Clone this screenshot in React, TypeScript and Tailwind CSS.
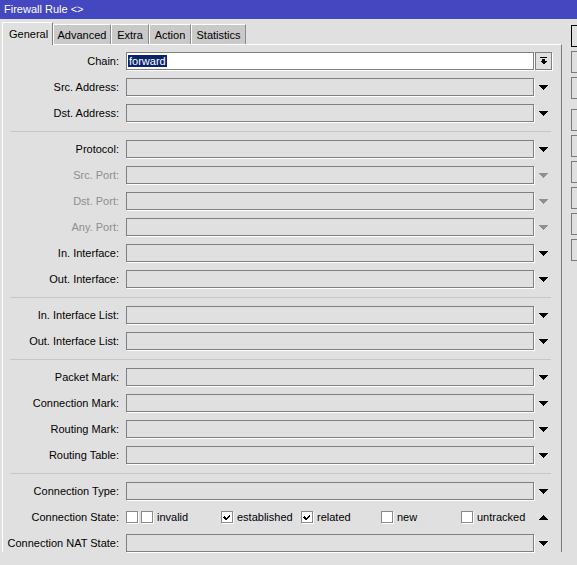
import React from "react";

const BG = "bg-[#e0e0e0]";

function Arrow({ disabled, up }: { disabled?: boolean; up?: boolean }) {
  return (
    <div className="w-[18px] h-[18px] flex items-center justify-center">
      <svg width="10" height="5" viewBox="0 0 10 5" shapeRendering="crispEdges">
        <polygon
          points={up ? "0,5 10,5 5,0" : "0,0 10,0 5,5"}
          fill={disabled ? "#8b918b" : "#000"}
        />
      </svg>
    </div>
  );
}

function Field({ white, children }: { white?: boolean; children?: React.ReactNode }) {
  return (
    <div
      className={`h-[18px] w-[408px] border border-[#808080] shadow-[1px_1px_0_#ffffff] flex items-center ${
        white ? "bg-white" : BG
      }`}
    >
      {children}
    </div>
  );
}

function Label({ text, disabled }: { text: string; disabled?: boolean }) {
  return (
    <div
      className={`w-[116px] shrink-0 text-right mr-[7px] whitespace-nowrap ${
        disabled ? "text-[#8e8e8e]" : "text-black"
      }`}
    >
      {text}
    </div>
  );
}

function Row({ label, disabled }: { label: string; disabled?: boolean }) {
  return (
    <div className="h-[18px] flex items-center">
      <Label text={label} disabled={disabled} />
      <Field />
      <Arrow disabled={disabled} />
    </div>
  );
}

function Sep() {
  return <div className="h-[2px] ml-[7px] w-[541px] border-b border-[#c6c6c6]" />;
}

function Check({ checked }: { checked?: boolean }) {
  return (
    <div className="w-[12px] h-[12px] shrink-0 border border-[#8a8a8a] bg-white shadow-[1px_1px_0_#ffffff] flex items-center justify-center">
      {checked && (
        <svg width="8" height="8" viewBox="0 0 8 8" shapeRendering="crispEdges">
          <path d="M1 3h1v1h1v1h1v-1h1v-1h1v-1h1v1h-1v1h-1v1h-1v1h-1v1h-1v-1h-1v-1h-1z" fill="#000" />
          <path d="M1 4h1v1h1v1h1v-1h1v-1h1v-1h1v1h-1v1h-1v1h-1v1h-1v-1h-1v-1h-1z" fill="#000" />
        </svg>
      )}
    </div>
  );
}

function CheckItem({ label, checked, w }: { label: string; checked?: boolean; w?: string }) {
  return (
    <div className={`flex items-center ${w ?? ""}`}>
      <Check checked={checked} />
      <span className="ml-[4px]">{label}</span>
    </div>
  );
}

export default function App() {
  const tabs = [
    { name: "Advanced", w: "w-[58px]" },
    { name: "Extra", w: "w-[38px]" },
    { name: "Action", w: "w-[42px]" },
    { name: "Statistics", w: "w-[55px]" },
  ];
  const buttonTops = ["", "mt-[4px]", "mt-[4px]", "mt-[10px]", "mt-[4px]", "mt-[4px]", "mt-[4px]", "mt-[4px]", "mt-[4px]"];
  return (
    <div
      className={`w-[577px] h-[565px] overflow-hidden ${BG} text-[11px] leading-[13px] text-black`}
      style={{ fontFamily: '"Liberation Sans", Arial, sans-serif' }}
    >
      <div className="h-[19px] bg-[#4447bf] text-white flex items-center pl-[4px]">Firewall Rule &lt;&gt;</div>
      <div className="flex">
        <div className="w-[562px] shrink-0 flex flex-col">
          <div className="h-[22px] mt-[3px] flex items-end pl-[2px]">
            <div className={`relative z-10 -mb-px h-[23px] w-[51px] ${BG} border-l border-t border-white border-r-[#808080] border-r flex items-start pt-[5px] pl-[6px]`}>
              General
            </div>
            {tabs.map((t) => (
              <div
                key={t.name}
                className={`h-[20px] ${t.w} bg-[#c9c9c9] border-l border-t border-white border-r border-r-[#8a8a8a] flex items-start pt-[4px] justify-center`}
              >
                {t.name}
              </div>
            ))}
          </div>
          <div className="ml-[2px] flex-1 border-t border-l border-white border-r border-r-[#7a7a7a] pt-[7px] flex flex-col gap-[8px]">
            <div className="h-[18px] flex items-center">
              <Label text="Chain:" />
              <Field white>
                <span className="ml-px bg-[#0a246a] text-white px-px leading-[12px]">forward</span>
              </Field>
              <div className="ml-px w-[17px] h-[18px] border border-[#808080] shadow-[1px_1px_0_#ffffff] flex items-center justify-center">
                <svg width="7" height="8" viewBox="0 0 7 8" shapeRendering="crispEdges">
                  <rect x="0" y="0" width="7" height="1" fill="#000" />
                  <rect x="2" y="2" width="3" height="2" fill="#000" />
                  <polygon points="0,4 7,4 3.5,7.5" fill="#000" />
                </svg>
              </div>
            </div>
            <Row label="Src. Address:" />
            <Row label="Dst. Address:" />
            <Sep />
            <Row label="Protocol:" />
            <Row label="Src. Port:" disabled />
            <Row label="Dst. Port:" disabled />
            <Row label="Any. Port:" disabled />
            <Row label="In. Interface:" />
            <Row label="Out. Interface:" />
            <Sep />
            <Row label="In. Interface List:" />
            <Row label="Out. Interface List:" />
            <Sep />
            <Row label="Packet Mark:" />
            <Row label="Connection Mark:" />
            <Row label="Routing Mark:" />
            <Row label="Routing Table:" />
            <Sep />
            <Row label="Connection Type:" />
            <div className="h-[18px] flex items-center">
              <Label text="Connection State:" />
              <div className="w-[408px] flex items-center">
                <Check />
                <div className="ml-[3px] flex items-center">
                  <CheckItem label="invalid" w="w-[80px]" />
                  <CheckItem label="established" checked w="w-[80px]" />
                  <CheckItem label="related" checked w="w-[80px]" />
                  <CheckItem label="new" w="w-[80px]" />
                  <CheckItem label="untracked" />
                </div>
              </div>
              <Arrow up />
            </div>
            <Row label="Connection NAT State:" />
          </div>
        </div>
        <div className="ml-[9px] mt-[6px] flex flex-col flex-1">
          {buttonTops.map((m, i) => (
            <div
              key={i}
              className={`${m} h-[22px] w-[20px] border ${
                i === 0 ? "border-black" : "border-[#7a7a7a]"
              } ${BG}`}
            />
          ))}
        </div>
      </div>
    </div>
  );
}
